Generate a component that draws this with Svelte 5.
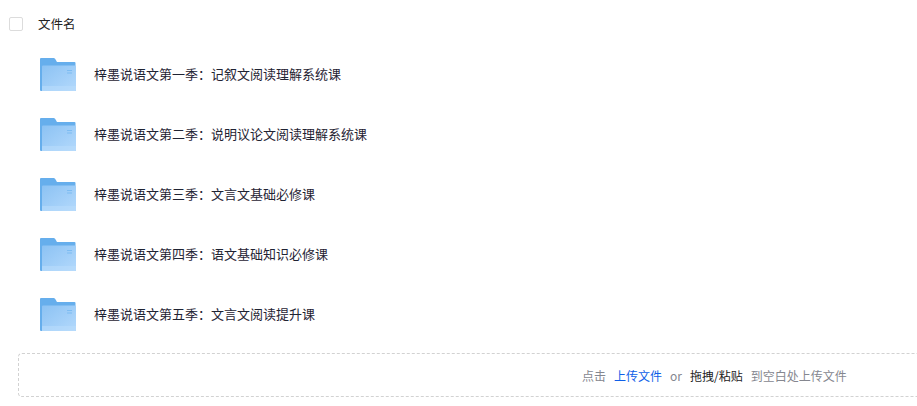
<script>
	const folders = [
		'梓墨说语文第一季：记叙文阅读理解系统课',
		'梓墨说语文第二季：说明议论文阅读理解系统课',
		'梓墨说语文第三季：文言文基础必修课',
		'梓墨说语文第四季：语文基础知识必修课',
		'梓墨说语文第五季：文言文阅读提升课'
	];
</script>

<div class="page">
	<div class="head">
		<span class="check"></span>
		<span class="head-name">文件名</span>
	</div>

	<ul class="list">
		{#each folders as name, i}
			<li class="row">
				<svg class="folder" width="36" height="33" viewBox="0 0 36 33">
					<defs>
						<linearGradient id={'front' + i} x1="0" y1="0" x2="1" y2="1">
							<stop offset="0" stop-color="#8cc2f3" />
							<stop offset="1" stop-color="#b3d9fc" />
						</linearGradient>
					</defs>
					<path d="M1 0h12.5q1 0 1.6.8L17 4h17.5q1 0 1 1v7H36V32q0 1-1 1H1q-1 0-1-1V1q0-1 1-1z" fill="#66aeec" />
					<path d="M3 7.5h32q1 0 1 1V32q0 1-1 1H2V8.5q0-1 1-1z" fill={'url(#front' + i + ')'} />
					<rect x="2" y="28" width="34" height="5" fill="#b9dcfb" opacity="0.6" />
					<rect x="27" y="12" width="5" height="1" fill="#7dbcf2" />
					<rect x="27" y="14.5" width="5" height="1" fill="#7dbcf2" />
				</svg>
				<span class="name">{name}</span>
			</li>
		{/each}
	</ul>

	<div class="drop">
		<span class="muted">点击</span>
		<span class="link">上传文件</span>
		<span class="muted or">or</span>
		<span class="dark">拖拽/粘贴</span>
		<span class="muted">到空白处上传文件</span>
	</div>
</div>

<style>
	:global(body) {
		margin: 0;
		background: #fff;
		overflow: hidden;
	}

	.page {
		width: 917px;
		height: 406px;
		overflow: hidden;
		font-family: "Noto Sans CJK SC", "Liberation Sans", sans-serif;
		font-size: 13px;
		color: #1f2333;
	}

	.head {
		display: flex;
		align-items: center;
		height: 47px;
		padding-left: 9px;
	}

	.check {
		box-sizing: border-box;
		width: 14px;
		height: 14px;
		border: 1px solid #dcdcdc;
		border-radius: 2px;
	}

	.head-name {
		margin-left: 15px;
		font-size: 12.5px;
		color: #222;
	}

	.list {
		list-style: none;
		margin: -3px 0 0;
		padding: 0 0 0 40px;
	}

	.row {
		display: flex;
		align-items: center;
		height: 60px;
	}

	.folder {
		flex: none;
		margin-top: 1px;
	}

	.name {
		margin-left: 18px;
		margin-top: -2px;
	}

	.drop {
		box-sizing: border-box;
		display: flex;
		align-items: center;
		gap: 8px;
		width: 920px;
		height: 44px;
		margin: 9px 0 0 18px;
		padding-left: 563px;
		border: 1px dashed #d2d2d2;
		border-right: none;
		border-radius: 4px 0 0 4px;
		font-size: 12px;
	}

	.muted {
		color: #85878f;
	}

	.link {
		color: #0f5fe8;
	}

	.dark {
		color: #222;
	}
</style>
